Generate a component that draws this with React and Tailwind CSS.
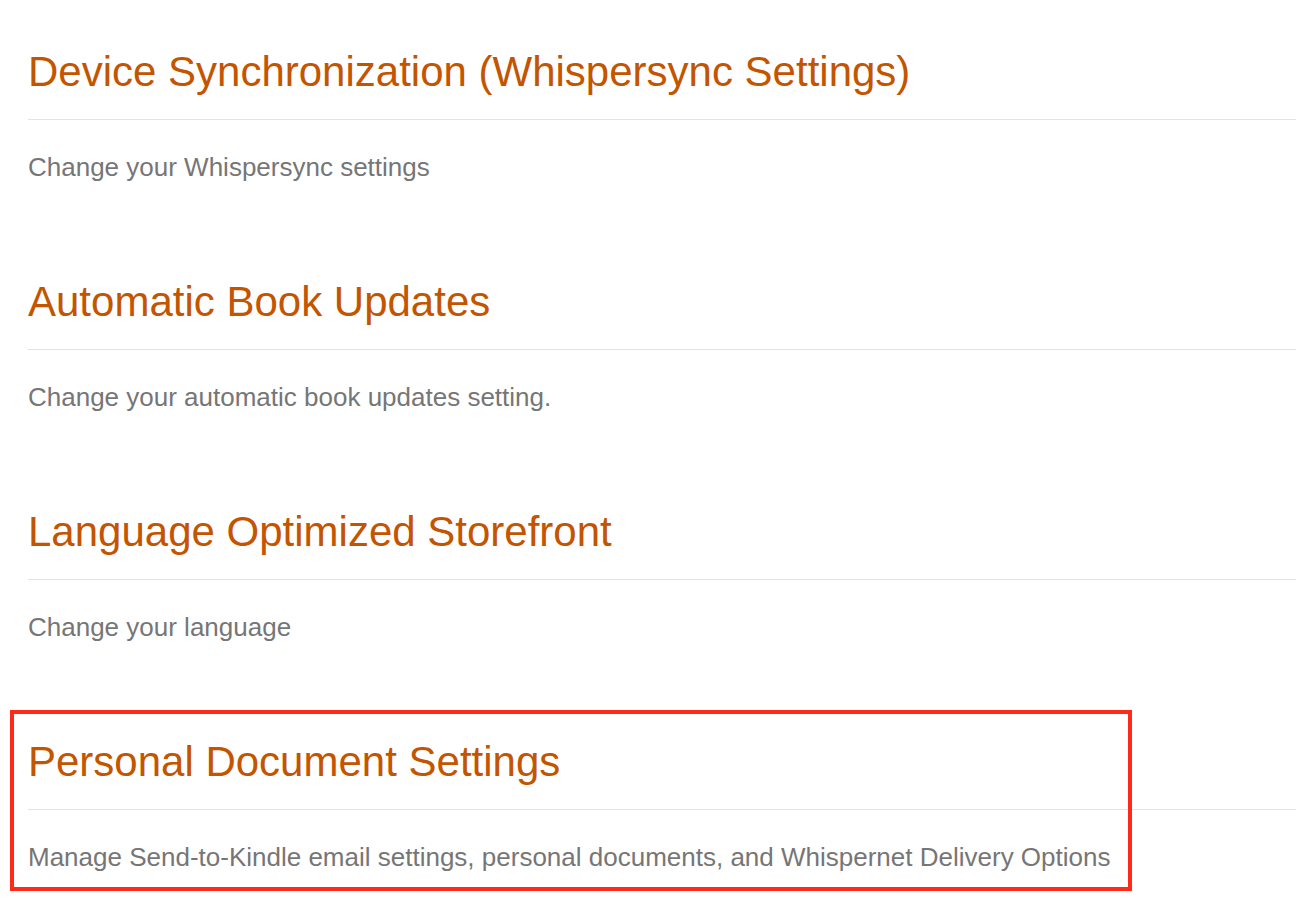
import React from 'react'

const sections = [
  { title: 'Device Synchronization (Whispersync Settings)', text: 'Change your Whispersync settings' },
  { title: 'Automatic Book Updates', text: 'Change your automatic book updates setting.' },
  { title: 'Language Optimized Storefront', text: 'Change your language' },
  { title: 'Personal Document Settings', text: 'Manage Send-to-Kindle email settings, personal documents, and Whispernet Delivery Options', highlight: true },
]

export default function App() {
  return (
    <div className="min-h-[908px] bg-white pl-[28px] pt-[48px] font-['Liberation_Sans',Arial,sans-serif]">
      {sections.map((s) => (
        <section key={s.title} className="relative mb-[97px]">
          {s.highlight && (
            <div className="pointer-events-none absolute left-[-18px] top-[-28px] h-[181px] w-[1122px] border-[4px] border-[#ff2a1a]" />
          )}
          <h2 className="border-b border-[#e3e3e3] pb-[23px] text-[42px] leading-[48px] text-[#c45500]">
            {s.title}
          </h2>
          <p className="mt-[33px] text-[26px] leading-[28px] text-[#767676]">{s.text}</p>
        </section>
      ))}
    </div>
  )
}
